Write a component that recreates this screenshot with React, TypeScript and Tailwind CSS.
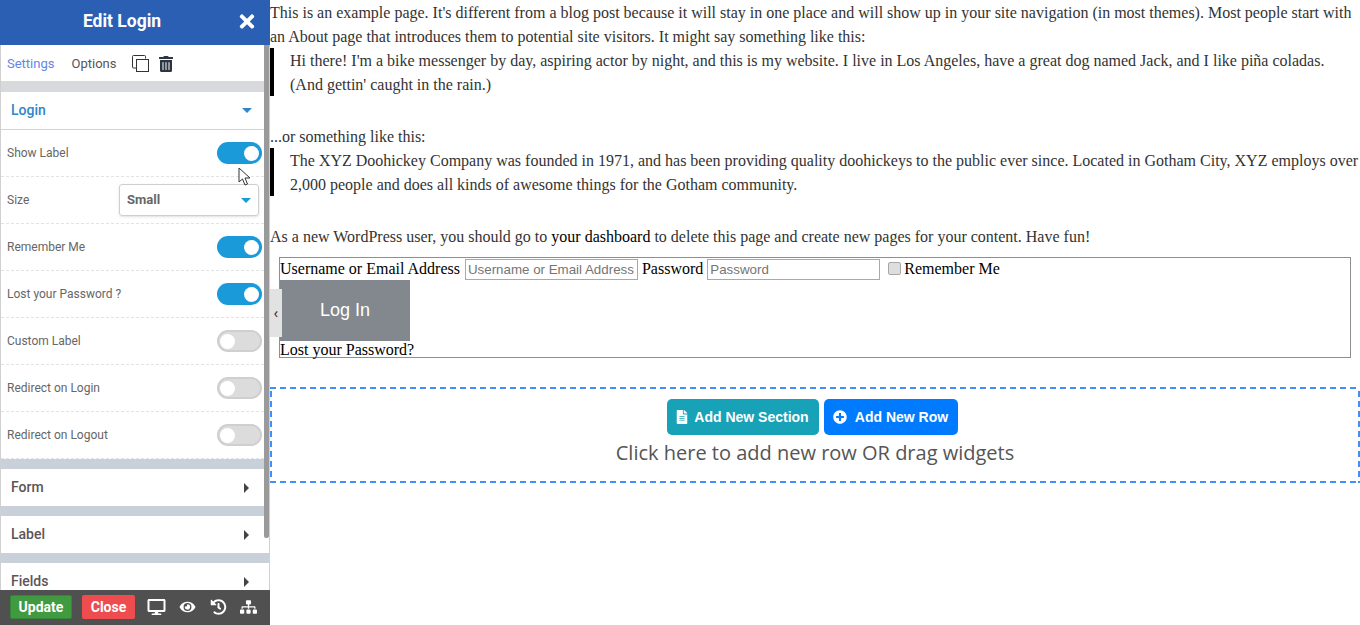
import { FaDesktop, FaEye, FaFileAlt, FaHistory, FaPlusCircle, FaSitemap, FaTimes, FaTrashAlt } from "react-icons/fa";

function Toggle({ on }: { on?: boolean }) {
  return (
    <div
      className={
        on
          ? "w-[45px] h-[22px] rounded-full bg-[#1a9ad9] flex items-center justify-end pr-[3px]"
          : "w-[45px] h-[22px] rounded-full bg-[#dcdcdc] border-2 border-[#cfcfcf] flex items-center pl-[1px]"
      }
    >
      <div className="w-[15px] h-[15px] rounded-full bg-white" />
    </div>
  );
}

function Row({ label, on }: { label: string; on?: boolean }) {
  return (
    <div className="h-[47px] shrink-0 flex items-center justify-between pl-[6px] pr-[7px] border-b border-dashed border-[#e3e3e3]">
      <span className="text-xs text-[#666] -mt-[1px]">{label}</span>
      <Toggle on={on} />
    </div>
  );
}

function Section({ label }: { label: string }) {
  return (
    <>
      <div className="h-[10px] shrink-0 bg-[#c8d0da]" />
      <div className="h-[37px] shrink-0 flex items-center justify-between pl-[10px] pr-[20px]">
        <span className="text-sm font-medium text-[#5d5458] -mt-[1px]">{label}</span>
        <div className="w-0 h-0 border-y-[5px] border-y-transparent border-l-[5px] border-l-[#444]" />
      </div>
    </>
  );
}

function Sidebar() {
  return (
    <div className="relative w-[270px] h-[625px] shrink-0 flex flex-col font-['Roboto',sans-serif]">
      <div className="h-[45px] shrink-0 bg-[#2a5fb4] flex items-center text-white relative">
        <div className="flex-1 text-center text-[17.5px] font-bold pr-[26px] -mt-[2px]">Edit Login</div>
        <FaTimes className="absolute left-[237px] top-[11px] w-[20px] h-[21px]" />
      </div>

      <div className="flex-1 overflow-hidden border-x border-[#d0d0d0] bg-white flex flex-col">
        <div className="h-[36px] shrink-0 flex items-center pl-[6px] text-[13px]">
          <span className="text-[#5f86e6] mt-[1px]">Settings</span>
          <span className="text-[#555] ml-[17px] mt-[1px]">Options</span>
          <svg className="ml-[16px] mt-[1px]" width="18" height="17" viewBox="0 0 18 17" fill="none" stroke="#333" strokeWidth="1">
            <path d="M13.5 3.5 V1.5 a1 1 0 0 0 -1 -1 H1.5 a1 1 0 0 0 -1 1 V12 a1 1 0 0 0 1 1 H4" />
            <rect x="4.5" y="4.5" width="12" height="12" fill="#fff" />
          </svg>
          <FaTrashAlt className="ml-[9px] mt-[1px] w-[14px] h-[16px] text-[#2d3540]" />
        </div>
        <div className="h-[11px] shrink-0 bg-[#d7d9dc]" />
        <div className="h-[38px] shrink-0 flex items-center justify-between pl-[10px] pr-[17px] border-b border-[#d4d4d4]">
          <span className="text-sm font-medium text-[#2f86c6] -mt-[1px]">Login</span>
          <div className="w-0 h-0 border-x-[5px] border-x-transparent border-t-[5px] border-t-[#2f86c6]" />
        </div>
        <Row label="Show Label" on />
        <div className="h-[47px] shrink-0 flex items-center justify-between pl-[6px] pr-[10px] border-b border-dashed border-[#e3e3e3]">
          <span className="text-xs text-[#666]">Size</span>
          <div className="w-[140px] h-[32px] rounded-[3px] border border-[#cfcfcf] shadow-sm flex items-center justify-between pl-[7px] pr-[7px]">
            <span className="text-[13px] font-bold text-[#666]">Small</span>
            <div className="w-0 h-0 border-x-[5px] border-x-transparent border-t-[5px] border-t-[#1a9ad9]" />
          </div>
        </div>
        <Row label="Remember Me" on />
        <Row label="Lost your Password ?" on />
        <Row label="Custom Label" />
        <Row label="Redirect on Login" />
        <Row label="Redirect on Logout" />
        <Section label="Form" />
        <Section label="Label" />
        <Section label="Fields" />
      </div>

      <div className="h-[35px] shrink-0 bg-[#505050] flex items-center pl-[10px] pb-px text-white">
        <button className="w-[62px] h-[24px] rounded-[2px] bg-[#3f9a40] border border-[#358636] text-sm font-bold">Update</button>
        <button className="w-[53px] h-[24px] ml-[10px] rounded-[2px] bg-[#ef4c4f] text-sm font-bold">Close</button>
        <FaDesktop className="ml-[12px] w-[19px] h-[16px]" />
        <FaEye className="ml-[13px] w-[17px] h-[14px]" />
        <FaHistory className="ml-[14px] w-[17px] h-[16px]" />
        <FaSitemap className="ml-[13px] w-[17px] h-[16px]" />
      </div>

      {/* scrollbar over the panel */}
      <div className="absolute left-[264px] top-[45px] w-[5px] h-[493px] bg-[#9a9a9a] rounded-b-[2px]" />
    </div>
  );
}

function Main() {
  return (
    <div className="flex-1 min-w-0 font-['Liberation_Serif',serif] text-base leading-6 text-[#333]">
      <p className="pt-px -mb-px">This is an example page. It's different from a blog post because it will stay in one place and will show up in your site navigation (in most themes). Most people start with an About page that introduces them to potential site visitors. It might say something like this:</p>
      <blockquote className="h-12 pt-px border-l-4 border-black pl-4 mb-7">
        Hi there! I'm a bike messenger by day, aspiring actor by night, and this is my website. I live in Los Angeles, have a great dog named Jack, and I like piña coladas. (And gettin' caught in the rain.)
      </blockquote>
      <p className="pt-px -mb-px">...or something like this:</p>
      <blockquote className="h-12 pt-px border-l-4 border-black pl-4 mb-7">
        The XYZ Doohickey Company was founded in 1971, and has been providing quality doohickeys to the public ever since. Located in Gotham City, XYZ employs over 2,000 people and does all kinds of awesome things for the Gotham community.
      </blockquote>
      <p className="pt-px -mb-px">As a new WordPress user, you should go to <span className="text-black">your dashboard</span> to delete this page and create new pages for your content. Have fun!</p>

      <div className="ml-[9px] mr-[9px] mt-[9px] h-[101px] border border-[#8f8f8f] text-black leading-4">
        <div className="h-[22px] flex items-center whitespace-pre">
          <span>Username or Email Address </span>
          <input placeholder="Username or Email Address" className="ml-[1px] w-[173px] h-[21px] border border-[#a9a9a9] px-[2px] font-['Liberation_Sans',sans-serif] text-[13.33px] placeholder:text-[#757575]" />
          <span> Password </span>
          <input placeholder="Password" className="w-[173px] h-[21px] border border-[#a9a9a9] px-[2px] font-['Liberation_Sans',sans-serif] text-[13.33px] placeholder:text-[#757575]" />
          <input type="checkbox" className="appearance-none ml-[8px] -mt-[2px] w-[13px] h-[13px] rounded-[2px] border border-[#a8a8a8] bg-[#dedede]" />
          <span className="ml-[3px]">Remember Me</span>
        </div>
        <div className="w-[130px] h-[61px] pb-[2px] bg-[#82888d] text-white flex items-center justify-center font-['Liberation_Sans',sans-serif] text-lg">Log In</div>
        <div className="pt-px">Lost your Password?</div>
      </div>

      <div className="mt-[29px] h-[96px] flex flex-col items-center font-['Open_Sans',sans-serif] bg-[linear-gradient(90deg,#3f90f8_6px,transparent_6px),linear-gradient(90deg,#3f90f8_6px,transparent_6px),linear-gradient(0deg,#3f90f8_6px,transparent_6px),linear-gradient(0deg,#3f90f8_6px,transparent_6px)] bg-[length:10px_2px,10px_2px,2px_10px,2px_10px] bg-[position:0_0,0_100%,0_0,100%_0] [background-repeat:repeat-x,repeat-x,repeat-y,repeat-y]">
        <div className="mt-[12px] mr-[6px] flex gap-[5px] text-white font-['Liberation_Sans',sans-serif] text-sm font-bold">
          <div className="w-[152px] h-[36px] rounded-[5px] bg-[#17a2b8] flex items-center justify-center gap-[6px]">
            <FaFileAlt className="w-[12px] h-[14px]" />
            Add New Section
          </div>
          <div className="w-[134px] h-[36px] rounded-[5px] bg-[#007bff] flex items-center justify-center gap-[8px]">
            <FaPlusCircle className="w-[14px] h-[14px]" />
            Add New Row
          </div>
        </div>
        <div className="mt-[3px] text-xl leading-[30px] text-[#555]">Click here to add new row OR drag widgets</div>
      </div>
    </div>
  );
}

export default function App() {
  return (
    <div className="relative flex w-full h-[625px] overflow-hidden bg-white">
      <Sidebar />
      <Main />
      {/* collapse handle */}
      <div className="absolute left-[270px] top-[289px] w-[12px] h-[48px] bg-[#e2e2e2] flex items-center justify-center text-sm text-[#333]">‹</div>
      {/* mouse cursor */}
      <svg className="absolute left-[238px] top-[167px]" width="13" height="20" viewBox="0 0 13 20">
        <path d="M1 1 L1 15 L4.5 12 L7 18 L9.5 17 L7 11 L12 11 Z" fill="#fff" stroke="#333" strokeWidth="1" />
      </svg>
    </div>
  );
}
